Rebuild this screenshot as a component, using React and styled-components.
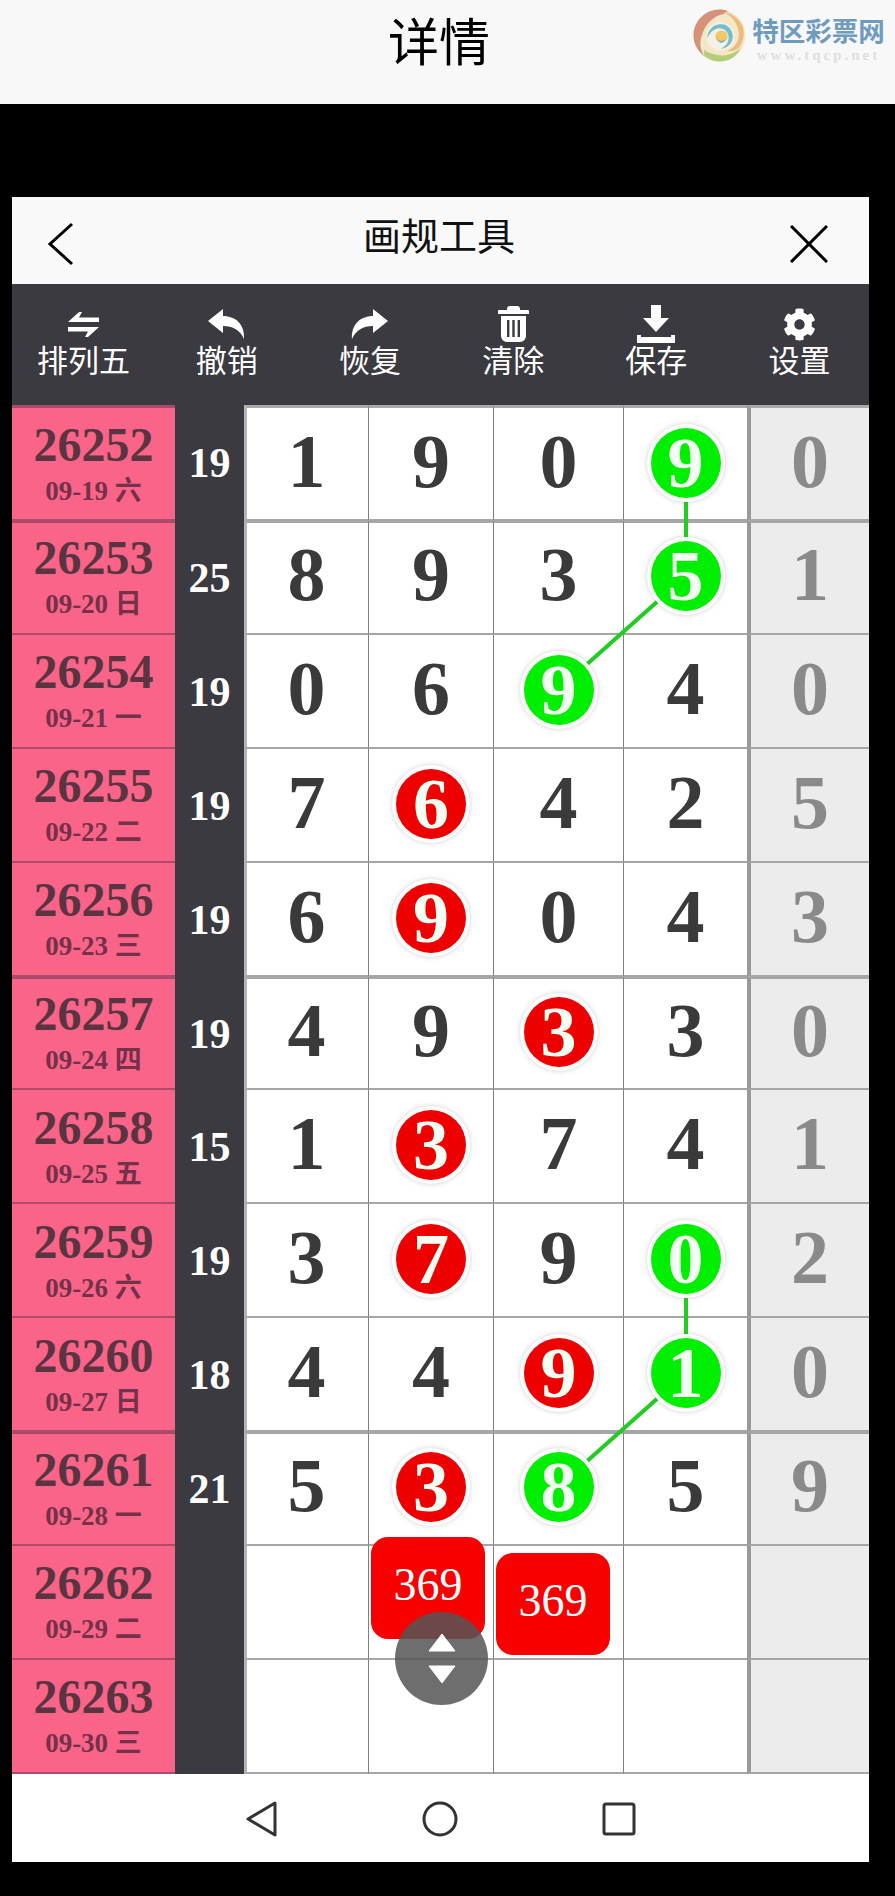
import React from "react";
import styled, { createGlobalStyle } from "styled-components";
import { FaCog } from "react-icons/fa";

const Global = createGlobalStyle`
  html, body { margin: 0; padding: 0; background: #000; }
  * { box-sizing: border-box; }
`;

const CJK = `"Noto Sans CJK SC", "Noto Sans", sans-serif`;
const SERIF = `"Liberation Serif", "Noto Sans CJK SC", serif`;
const COLS = "163px 69px 125px 125px 130px 123px 122px";

const Page = styled.div`
  width: 895px;
  height: 1896px;
  background: #000;
  display: flex;
  flex-direction: column;
  overflow: hidden;
`;
const TopBar = styled.header`
  height: 104px;
  flex: none;
  background: #f8f8f8;
  display: grid;
  grid-template-columns: 388px 102px 1fr;
  padding: 0 10px 0 0;
`;
const PageTitle = styled.h1`
  grid-column: 2;
  margin: 7px 0 0;
  font: 400 51px/64px ${CJK};
  color: #000;
  white-space: nowrap;
`;
const Logo = styled.div`
  grid-column: 3;
  justify-self: end;
  display: flex;
  align-items: flex-start;
  gap: 6px;
  padding-top: 9px;
  opacity: 0.88;
`;
const LogoText = styled.div`
  display: flex;
  flex-direction: column;
  align-items: center;
  width: 133px;
`;
const LogoName = styled.span`
  font: 700 26.5px/30px ${CJK};
  color: #5d8fb8;
  white-space: nowrap;
  margin-top: 6px;
`;
const LogoUrl = styled.span`
  font: 700 15px/14px "Liberation Serif", serif;
  letter-spacing: 3px;
  color: #dcdcdc;
  white-space: nowrap;
  margin-top: 3px;
`;
const Gap = styled.div`
  height: 93px;
  flex: none;
`;
const Panel = styled.main`
  width: 857px;
  margin-left: 12px;
  display: flex;
  flex-direction: column;
`;
const PanelHeader = styled.div`
  height: 87px;
  background: #f9f9f9;
  display: flex;
  align-items: center;
  justify-content: space-between;
  padding: 6px 41px 0 34px;
`;
const PanelTitle = styled.h2`
  margin: 0 0 20px 12px;
  font: 400 38px/48px ${CJK};
  color: #111;
`;
const Toolbar = styled.div`
  height: 121px;
  background: #3a3a40;
  display: grid;
  grid-template-columns: repeat(6, 143.2px);
  padding-top: 21px;
`;
const Tool = styled.div`
  display: flex;
  flex-direction: column;
  align-items: center;
  color: #fff;
`;
const ToolIcon = styled.div`
  height: 38px;
  display: flex;
  align-items: center;
  justify-content: center;
`;
const ToolLabel = styled.span`
  font: 400 31px/40px ${CJK};
  white-space: nowrap;
  margin-top: -4px;
`;
const Board = styled.div`
  position: relative;
  height: 1370px;
  display: grid;
  grid-template-rows: 116px repeat(11, 113.9px);
  overflow: hidden;
  background: #fff;
`;
const Row = styled.div`
  display: grid;
  grid-template-columns: ${COLS};
  min-height: 0;
`;
const IssueCell = styled.div`
  background: #fb6489;
  border-bottom: 2px solid #b04a6a;
  border-top: ${(p) => (p.$first ? "3px solid #a84a68" : p.$afterThick ? "2px solid #a84a68" : "0")};
  display: flex;
  flex-direction: column;
  align-items: center;
  justify-content: center;
  padding-top: 1px;
  padding-bottom: ${(p) => (p.$afterThick ? 2 : 0)}px;
`;
const IssueNo = styled.span`
  font: 700 48px/52px ${SERIF};
  color: #5a3440;
`;
const IssueDate = styled.span`
  font: 700 27px/36px ${SERIF};
  color: #75304a;
  white-space: nowrap;
  margin-top: 2px;
`;
const SumCell = styled.div`
  background: #3a3a40;
  color: #fff;
  font: 700 42px/1 ${SERIF};
  display: flex;
  align-items: center;
  justify-content: center;
`;
const Cell = styled.div`
  position: relative;
  background: ${(p) => (p.$muted ? "#ececec" : "#fff")};
  color: ${(p) => (p.$muted ? "#8a8a8a" : "#3a3a3a")};
  border-bottom: 2px solid #a6a6a6;
  border-top: ${(p) => (p.$first ? "3px solid #aaa" : p.$afterThick ? "2px solid #a6a6a6" : "0")};
  border-left: ${(p) => (p.$muted ? "4px solid #999" : p.$lead ? "3px solid #b5b5b5" : "0")};
  border-right: ${(p) => (p.$beforeMuted || p.$muted ? "0" : "1px solid #808080")};
  font: 700 76px/1 ${SERIF};
  display: flex;
  align-items: center;
  justify-content: center;
  padding-bottom: ${(p) => (p.$afterThick ? 8 : 6)}px;
  padding-right: ${(p) => (p.$lead ? 2 : 0)}px;
`;
const Ball = styled.span`
  position: relative;
  z-index: 2;
  width: 70px;
  height: 70px;
  margin-top: 4px;
  border-radius: 50%;
  flex: none;
  background: ${(p) => (p.$tone === "g" ? "#00ee00" : "#ee0000")};
  box-shadow: 0 0 0 4px #fff, 0 0 5px 4px rgba(120, 120, 120, 0.35);
  color: #f2fff2;
  font: 700 72px/70px ${SERIF};
  text-align: center;
`;
const Links = styled.svg`
  position: absolute;
  inset: 0;
  width: 857px;
  height: 1370px;
  z-index: 1;
  pointer-events: none;
`;
const Sticker = styled.div`
  position: absolute;
  z-index: 3;
  left: ${(p) => p.$x}px;
  top: ${(p) => p.$y}px;
  width: 114px;
  height: 102px;
  border-radius: 17px;
  background: #f80000;
  color: #fff;
  font: 400 46px/96px "Liberation Serif", serif;
  text-align: center;
`;
const Scroller = styled.div`
  position: absolute;
  z-index: 4;
  left: 383px;
  top: 1207px;
  width: 93px;
  height: 93px;
  border-radius: 50%;
  background: rgba(85, 85, 85, 0.85);
  display: flex;
  flex-direction: column;
  align-items: center;
  justify-content: center;
  gap: 13px;
`;
const Nav = styled.nav`
  height: 87px;
  background: #fff;
  display: flex;
  align-items: center;
  justify-content: center;
  gap: 144px;
  padding: 0 0 0 1px;
`;

const rows = [
  ["26252", "09-19 六", "19", ["1", "9", "0", "9g"], "0"],
  ["26253", "09-20 日", "25", ["8", "9", "3", "5g"], "1"],
  ["26254", "09-21 一", "19", ["0", "6", "9g", "4"], "0"],
  ["26255", "09-22 二", "19", ["7", "6r", "4", "2"], "5"],
  ["26256", "09-23 三", "19", ["6", "9r", "0", "4"], "3"],
  ["26257", "09-24 四", "19", ["4", "9", "3r", "3"], "0"],
  ["26258", "09-25 五", "15", ["1", "3r", "7", "4"], "1"],
  ["26259", "09-26 六", "19", ["3", "7r", "9", "0g"], "2"],
  ["26260", "09-27 日", "18", ["4", "4", "9r", "1g"], "0"],
  ["26261", "09-28 一", "21", ["5", "3r", "8g", "5"], "9"],
  ["26262", "09-29 二", "", ["", "", "", ""], ""],
  ["26263", "09-30 三", "", ["", "", "", ""], ""],
];
const afterThick = new Set([1, 5, 9]);

const SwapIcon = () => (
  <svg width="31" height="25" viewBox="0 0 31 25" fill="#fff">
    <path d="M11 0 L0 10 L31 10 L31 5.5 L11 5.5 L14 0 Z" />
    <path d="M20 25 L31 15 L0 15 L0 19.5 L20 19.5 L17 25 Z" />
  </svg>
);
const ReplyIcon = () => (
  <svg width="37" height="30" viewBox="0 0 37 30" fill="#fff">
    <path d="M0 12 L15 0 V7 C28 7 37 16 36 30 C32 21 25 17 15 17 V24 Z" />
  </svg>
);
const ShareIcon = () => (
  <svg width="37" height="30" viewBox="0 0 37 30" fill="#fff">
    <path d="M37 12 L22 0 V7 C9 7 0 16 1 30 C5 21 12 17 22 17 V24 Z" />
  </svg>
);
const TrashIcon = () => (
  <svg width="31" height="36" viewBox="0 0 31 36">
    <path fill="#fff" d="M9 3c0-2 1-3 3-3h7c2 0 3 1 3 3v1h8a1 1 0 0 1 1 1v3H0V5a1 1 0 0 1 1-1h8zM3 10h25v20a6 6 0 0 1-6 6H9a6 6 0 0 1-6-6z" />
    <path fill="#3a3a40" d="M9 14h2.4v17H9zM14.3 14h2.4v17h-2.4zM19.6 14H22v17h-2.4z" />
  </svg>
);
const SaveIcon = () => (
  <svg width="38" height="38" viewBox="0 0 38 38" fill="#fff">
    <path d="M14 0h10v13h8L19 27 6 13h8z" />
    <path d="M0 30h4v2h30v-2h4v8H0z" />
  </svg>
);
const tools = [
  ["排列五", <SwapIcon />],
  ["撤销", <ReplyIcon />],
  ["恢复", <ShareIcon />],
  ["清除", <TrashIcon />],
  ["保存", <SaveIcon />],
  ["设置", <FaCog size={33} />],
];

const SpiralLogo = () => (
  <svg width="53" height="53" viewBox="0 0 52 52" fill="none">
    <circle cx="26" cy="26" r="25.5" fill="#f2e6c2" />
    <path d="M26 .5C12 .5 .5 12 .5 26c0 8 4 15 10.500 20-4-6-5-14-2-21C12 15 20 7 30 5l4-3c-2-1-5-1.500-8-1.500z" fill="#d2836a" />
    <path d="M11 46c5 4 10 5.500 15 5.500 10 0 17-5 21-13.500-6 6-16 9-24 7-5-1-9-2-12-5z" fill="#a9c96a" />
    <path d="M30 3c9 1 16 7 19 15 2 8 0 15-4 20-4 3-8 4-11 3 7-3 12-10 11-18-1-9-7-16-15-20z" fill="#eeb36a" />
    <circle cx="27" cy="27" r="14" fill="#f4efe2" />
    <path d="M14 29c0-9 7-15 15-14 6 1 10 6 10 12 0 7-6 12-12 12 5-2 8-6 8-11s-4-9-9-9c-6 0-10 5-12 10z" fill="#5fb7c6" />
    <circle cx="28" cy="27" r="6" fill="#efc255" />
    <path d="M24 29c2 3 6 3 8 0-1 5-7 6-8 0z" fill="#69a9c9" />
  </svg>
);

export default function App() {
  return (
    <Page>
      <Global />
      <TopBar>
        <PageTitle>详情</PageTitle>
        <Logo>
          <SpiralLogo />
          <LogoText>
            <LogoName>特区彩票网</LogoName>
            <LogoUrl>www.tqcp.net</LogoUrl>
          </LogoText>
        </Logo>
      </TopBar>
      <Gap />
      <Panel>
        <PanelHeader>
          <svg width="30" height="44" viewBox="0 0 30 44" fill="none" stroke="#000" strokeWidth="3">
            <path d="M26 2 L4 22 L26 42" />
          </svg>
          <PanelTitle>画规工具</PanelTitle>
          <svg width="38" height="38" viewBox="0 0 38 38" fill="none" stroke="#000" strokeWidth="3">
            <path d="M1 1 L37 37 M37 1 L1 37" />
          </svg>
        </PanelHeader>
        <Toolbar>
          {tools.map(([label, icon]) => (
            <Tool key={label}>
              <ToolIcon>{icon}</ToolIcon>
              <ToolLabel>{label}</ToolLabel>
            </Tool>
          ))}
        </Toolbar>
        <Board>
          {rows.map(([no, date, sum, cells, last], i) => {
            const edge = { $first: i === 0, $afterThick: afterThick.has(i) };
            return (
              <Row key={no}>
                <IssueCell {...edge}>
                  <IssueNo>{no}</IssueNo>
                  <IssueDate>{date}</IssueDate>
                </IssueCell>
                <SumCell>{sum}</SumCell>
                {cells.map((c, j) => (
                  <Cell key={j} {...edge} $lead={j === 0} $beforeMuted={j === 3}>
                    {c.length === 2 ? <Ball $tone={c[1]}>{c[0]}</Ball> : c}
                  </Cell>
                ))}
                <Cell $muted {...edge}>{last}</Cell>
              </Row>
            );
          })}
          <Links viewBox="0 0 857 1370">
            <polyline points="674,57 674,171 546,285" fill="none" stroke="#22cc22" strokeWidth="4" />
            <polyline points="674,854 674,968 546,1082" fill="none" stroke="#22cc22" strokeWidth="4" />
          </Links>
          <Sticker $x={359} $y={1132}>369</Sticker>
          <Sticker $x={484} $y={1148}>369</Sticker>
          <Scroller>
            <svg width="28" height="19" viewBox="0 0 28 19"><path d="M14 1 L27 18 H1 Z" fill="#fff" stroke="#fff" strokeLinejoin="round" /></svg>
            <svg width="28" height="19" viewBox="0 0 28 19"><path d="M14 18 L27 1 H1 Z" fill="#fff" stroke="#fff" strokeLinejoin="round" /></svg>
          </Scroller>
        </Board>
        <Nav>
          <svg width="32" height="36" viewBox="0 0 32 36" fill="none" stroke="#333" strokeWidth="3" strokeLinejoin="round">
            <path d="M29 2 L2 18 L29 34 Z" />
          </svg>
          <svg width="36" height="36" viewBox="0 0 36 36" fill="none" stroke="#333" strokeWidth="3">
            <circle cx="18" cy="18" r="16" />
          </svg>
          <svg width="34" height="34" viewBox="0 0 34 34" fill="none" stroke="#333" strokeWidth="3">
            <rect x="2" y="2" width="30" height="30" rx="2" />
          </svg>
        </Nav>
      </Panel>
    </Page>
  );
}
